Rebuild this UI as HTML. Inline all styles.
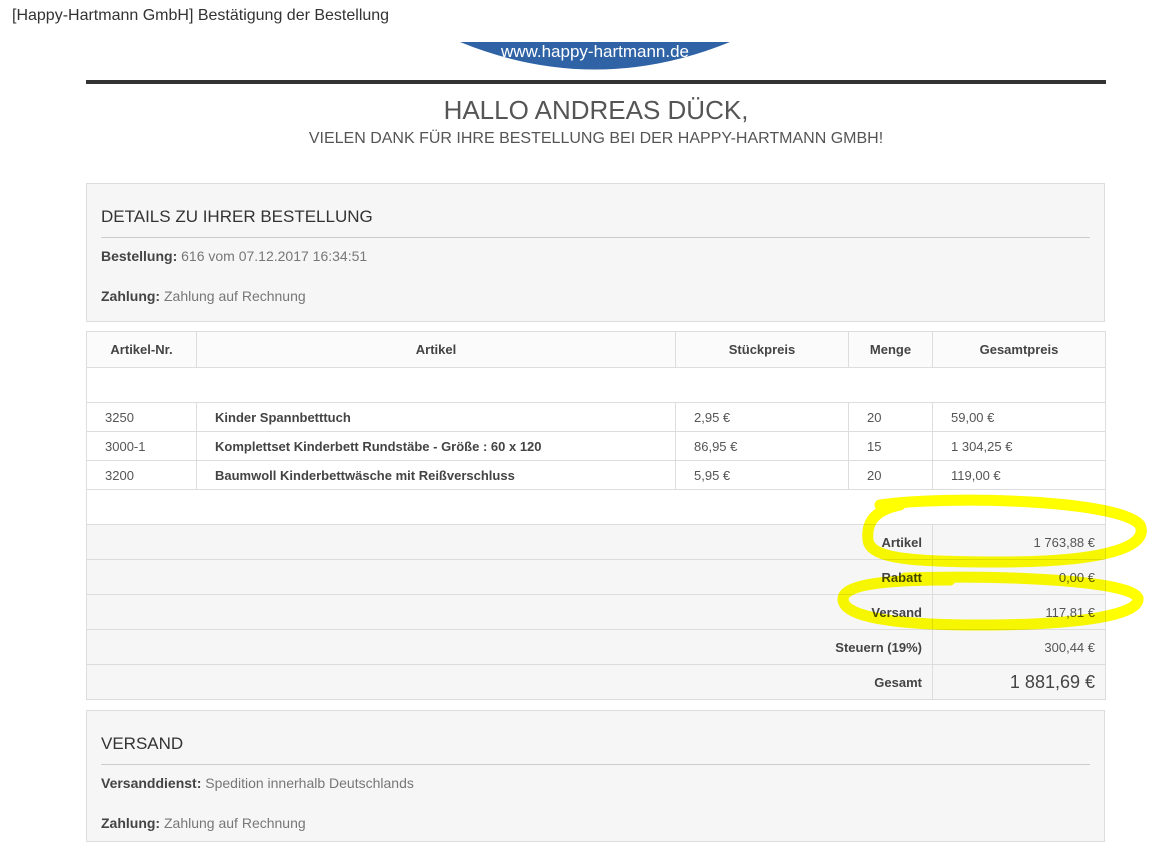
<!DOCTYPE html>
<html><head><meta charset="utf-8"><style>
body{margin:0;width:1149px;height:832px;overflow:hidden;background:#fff;font-family:"Liberation Sans",Arial,sans-serif;position:relative}
.a{position:absolute;white-space:nowrap}
.box{position:absolute;left:86px;width:1017px;background:#f6f6f6;border:1px solid #ddd}
table{position:absolute;left:86px;top:331px;width:1019px;border-collapse:collapse;font-size:13px;color:#555;table-layout:fixed}
td{border:1px solid #ddd;padding:0 18px;white-space:nowrap;overflow:hidden}
th{border:1px solid #ddd;font-weight:bold;font-size:13px;color:#444;background:#fbfbfb}
.s td{background:#f6f6f6;text-align:right;padding:0 10px}
.s td.l{font-weight:bold;color:#444}
b{color:#444}
</style></head><body>
<div class="a" style="left:12px;top:7px;font-size:16px;color:#333">[Happy-Hartmann GmbH] Bestätigung der Bestellung</div>
<svg class="a" style="left:455px;top:42px" width="280" height="30"><path d="M5 0 Q140 55 275 0 Z" fill="#2f63a6"/><text x="140" y="15" text-anchor="middle" fill="#fff" font-size="17" font-family="Liberation Sans">www.happy-hartmann.de</text></svg>
<div class="a" style="left:86px;top:80px;width:1020px;height:4px;background:#333"></div>
<div class="a" style="left:86px;width:1020px;top:95px;text-align:center;font-size:26px;color:#555">HALLO ANDREAS DÜCK,</div>
<div class="a" style="left:86px;width:1020px;top:130px;text-align:center;font-size:16px;color:#555">VIELEN DANK FÜR IHRE BESTELLUNG BEI DER HAPPY-HARTMANN GMBH!</div>
<div class="box" style="top:183px;height:137px">
<div class="a" style="left:14px;top:23px;font-size:17px;color:#333">DETAILS ZU IHRER BESTELLUNG</div>
<div class="a" style="left:14px;top:53px;width:989px;border-top:1px solid #ccc"></div>
<div class="a" style="left:14px;top:64px;font-size:14px;color:#777"><b>Bestellung:</b> 616 vom 07.12.2017 16:34:51</div>
<div class="a" style="left:14px;top:104px;font-size:14px;color:#777"><b>Zahlung:</b> Zahlung auf Rechnung</div>
</div>
<table>
<colgroup><col style="width:110px"><col style="width:479px"><col style="width:173px"><col style="width:84px"><col style="width:173px"></colgroup>
<tr style="height:36px"><th>Artikel-Nr.</th><th>Artikel</th><th>Stückpreis</th><th>Menge</th><th>Gesamtpreis</th></tr>
<tr style="height:35px"><td colspan="5"></td></tr>
<tr style="height:29px"><td>3250</td><td><b>Kinder Spannbetttuch</b></td><td>2,95 €</td><td>20</td><td>59,00 €</td></tr>
<tr style="height:29px"><td>3000-1</td><td><b>Komplettset Kinderbett Rundstäbe - Größe : 60 x 120</b></td><td>86,95 €</td><td>15</td><td>1 304,25 €</td></tr>
<tr style="height:29px"><td>3200</td><td><b>Baumwoll Kinderbettwäsche mit Reißverschluss</b></td><td>5,95 €</td><td>20</td><td>119,00 €</td></tr>
<tr style="height:35px"><td colspan="5"></td></tr>
<tr class="s" style="height:35px"><td colspan="4" class="l">Artikel</td><td>1 763,88 €</td></tr>
<tr class="s" style="height:35px"><td colspan="4" class="l">Rabatt</td><td>0,00 €</td></tr>
<tr class="s" style="height:35px"><td colspan="4" class="l">Versand</td><td>117,81 €</td></tr>
<tr class="s" style="height:35px"><td colspan="4" class="l">Steuern (19%)</td><td>300,44 €</td></tr>
<tr class="s" style="height:35px"><td colspan="4" class="l">Gesamt</td><td style="font-size:18px;color:#444">1 881,69 €</td></tr>
</table>
<div class="box" style="top:710px;height:130px">
<div class="a" style="left:14px;top:23px;font-size:17px;color:#333">VERSAND</div>
<div class="a" style="left:14px;top:53px;width:989px;border-top:1px solid #ccc"></div>
<div class="a" style="left:14px;top:64px;font-size:14px;color:#777"><b>Versanddienst:</b> Spedition innerhalb Deutschlands</div>
<div class="a" style="left:14px;top:104px;font-size:14px;color:#777"><b>Zahlung:</b> Zahlung auf Rechnung</div>
</div>
<svg class="a" style="left:0;top:0;mix-blend-mode:multiply" width="1149" height="832"><g fill="none" stroke="#ffff00" stroke-width="11" stroke-linecap="round">
<path d="M880 505 C950 495 1120 500 1140 525 C1150 548 1100 562 1000 562 C920 562 870 560 868 540 C866 522 875 510 900 505"/>
<path d="M905 578 C1000 575 1130 580 1138 598 C1140 615 1080 625 980 625 C900 625 845 618 843 600 C842 585 880 580 950 580"/>
</g></svg>
</body></html>
